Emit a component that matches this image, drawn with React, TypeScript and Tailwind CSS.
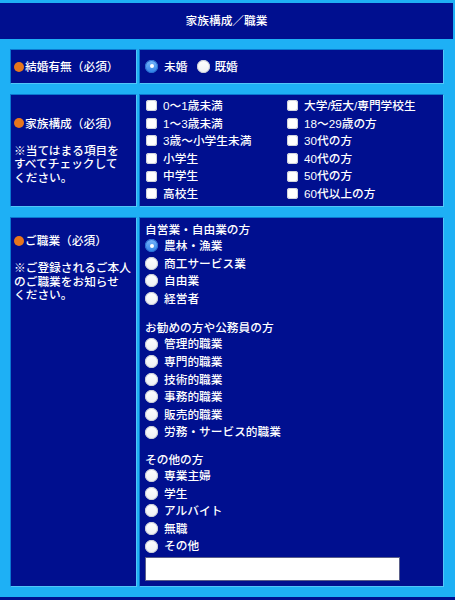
import React from "react";

const FONT = "font-['Liberation_Sans','Noto_Sans_CJK_JP',sans-serif]";

function Radio({ on }: { on?: boolean }) {
  if (on)
    return (
      <span className="flex h-[13px] w-[13px] shrink-0 items-center justify-center rounded-full bg-gradient-to-b from-[#7ab9fb] to-[#2b7fe8] shadow-[inset_0_0_0_1px_#2a6fd0]">
        <span className="h-[4px] w-[4px] rounded-full bg-white" />
      </span>
    );
  return <span className="h-[13px] w-[13px] shrink-0 rounded-full bg-gradient-to-b from-white to-[#eef0f4] shadow-[inset_0_0_0_1px_#c9ccd6]" />;
}

function Check() {
  return <span className="h-[11px] w-[11px] shrink-0 rounded-[3px] bg-white shadow-[inset_0_0_0_1px_#d0d3dc]" />;
}

function Dot() {
  return <span className="mr-[1px] inline-block h-[10px] w-[10px] shrink-0 rounded-full bg-[#e8761c]" />;
}

const cell = "bg-[#000f8f] border border-t-[#0b77cf] border-l-[#0b77cf] border-b-[#52c6f8] border-r-[#52c6f8] text-white";

function RadioRow({ label, on }: { label: string; on?: boolean }) {
  return (
    <div className="flex h-[17.6px] items-center gap-[6px]">
      <Radio on={on} />
      <span>{label}</span>
    </div>
  );
}

function Group({ title, items, first, gap = "mt-[14px]" }: { title: string; items: string[]; first?: boolean; gap?: string }) {
  return (
    <div className={first ? "" : gap}>
      <div className="h-[14px] leading-[14px]">{title}</div>
      {items.map((it, i) => (
        <RadioRow key={it} label={it} on={first && i === 0} />
      ))}
    </div>
  );
}

const family1 = ["0〜1歳未満", "1〜3歳未満", "3歳〜小学生未満", "小学生", "中学生", "高校生"];
const family2 = ["大学/短大/専門学校生", "18〜29歳の方", "30代の方", "40代の方", "50代の方", "60代以上の方"];

export default function App() {
  return (
    <div className={`h-[600px] w-[455px] bg-[#000f8f] text-[11.7px] font-medium text-white ${FONT}`}>
      <div className="flex h-[39px] items-center justify-center border-t-[3px] border-r-[2px] border-[#1eb0f5]">家族構成／職業</div>
      <div className="flex flex-col gap-[10px] bg-[#1eb0f5] pb-[10px] pl-[10px] pr-[11px] pt-[10px]">
        {/* 結婚 */}
        <div className="grid grid-cols-[127px_305px] gap-x-[2px]">
          <div className={`${cell} flex h-[35px] items-center pl-[3px]`}>
            <Dot />
            <span>結婚有無（必須）</span>
          </div>
          <div className={`${cell} flex items-center pl-[5px]`}>
            <div className="flex items-center gap-[6px]">
              <Radio on />
              <span>未婚</span>
            </div>
            <div className="ml-[10px] flex items-center gap-[4px]">
              <Radio />
              <span>既婚</span>
            </div>
          </div>
        </div>

        {/* 家族構成 */}
        <div className="grid grid-cols-[127px_305px] gap-x-[2px]">
          <div className={`${cell} flex h-[113px] flex-col justify-center pl-[3px] leading-[13.6px]`}>
            <div className="flex items-center">
              <Dot />
              <span>家族構成（必須）</span>
            </div>
            <div className="mt-[13.6px]">
              ※当てはまる項目を
              <br />
              すべてチェックして
              <br />
              ください。
            </div>
          </div>
          <div className={`${cell} grid grid-cols-[141px_1fr] pl-[6px] pt-[2px]`}>
            <div>
              {family1.map((f) => (
                <div key={f} className="flex h-[17.6px] items-center gap-[6px]">
                  <Check />
                  <span>{f}</span>
                </div>
              ))}
            </div>
            <div>
              {family2.map((f) => (
                <div key={f} className="flex h-[17.6px] items-center gap-[6px]">
                  <Check />
                  <span>{f}</span>
                </div>
              ))}
            </div>
          </div>
        </div>

        {/* 職業 */}
        <div className="grid grid-cols-[127px_305px] gap-x-[2px]">
          <div className={`${cell} pl-[3px] pt-[16px] leading-[13.6px]`}>
            <div className="flex items-center">
              <Dot />
              <span>ご職業（必須）</span>
            </div>
            <div className="mt-[13.6px]">
              ※ご登録されるご本人
              <br />
              のご職業をお知らせ
              <br />
              ください。
            </div>
          </div>
          <div className={`${cell} pb-[5px] pl-[5px] pt-[5px]`}>
            <Group first title="自営業・自由業の方" items={["農林・漁業", "商工サービス業", "自由業", "経営者"]} />
            <Group
              title="お勧めの方や公務員の方"
              items={["管理的職業", "専門的職業", "技術的職業", "事務的職業", "販売的職業", "労務・サービス的職業"]}
            />
            <Group gap="mt-[12px]" title="その他の方" items={["専業主婦", "学生", "アルバイト", "無職", "その他"]} />
            <input type="text" className="mt-[2px] block h-[24px] w-[255px] border border-[#5a5f8a] bg-white px-1 text-black outline-none" />
          </div>
        </div>
      </div>
    </div>
  );
}
